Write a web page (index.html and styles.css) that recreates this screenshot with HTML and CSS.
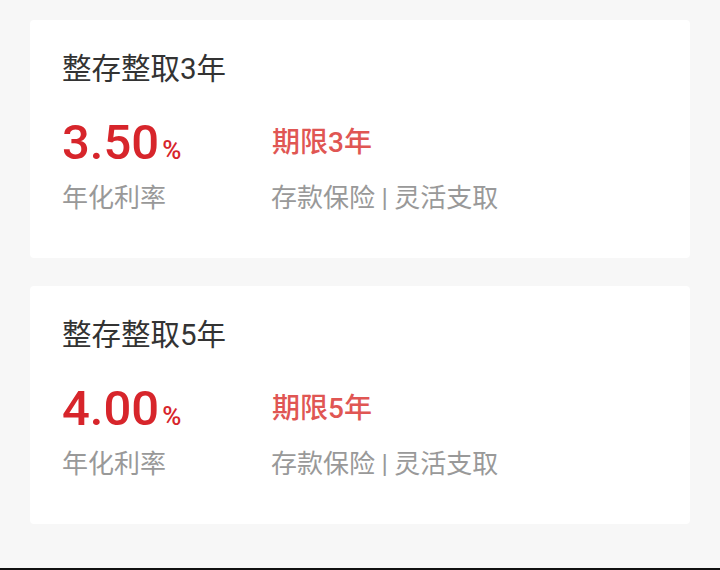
FILE: index.html
```html
<!DOCTYPE html>
<html lang="zh-CN">

<head>
    <meta charset="UTF-8">
    <meta name="viewport" content="width=device-width, initial-scale=1.0">
    <title>整存整取</title>
    <link rel="stylesheet" href="styles.css">
</head>

<body>
    <div id="page">
        <!-- 3 year product -->
        <div class="card">
            <div class="title">整存整取3年</div>
            <div class="stats">
                <div class="col">
                    <div class="rate">3.50<span class="pct">%</span></div>
                    <div class="label">年化利率</div>
                </div>
                <div class="col">
                    <div class="term">期限3年</div>
                    <div class="label">存款保险 | 灵活支取</div>
                </div>
            </div>
        </div>

        <!-- 5 year product -->
        <div class="card">
            <div class="title">整存整取5年</div>
            <div class="stats">
                <div class="col">
                    <div class="rate">4.00<span class="pct">%</span></div>
                    <div class="label">年化利率</div>
                </div>
                <div class="col">
                    <div class="term">期限5年</div>
                    <div class="label">存款保险 | 灵活支取</div>
                </div>
            </div>
        </div>
    </div>
</body>

</html>
```

FILE: styles.css
```css
body {
    background-color: #f7f7f7;
    font-family: Roboto, "Noto Sans CJK SC", sans-serif;
    margin: 0;
    padding: 0;
}

#page {
    min-height: 570px;
    box-sizing: border-box;
    padding: 20px 30px 0;
    border-bottom: 2px solid #111;
    display: flex;
    flex-direction: column;
    gap: 28px;
}

.card {
    background-color: #fff;
    border-radius: 4px;
    height: 238px;
    box-sizing: border-box;
    padding: 29px 32px 0;
}

.title {
    color: #333;
    font-size: 29.5px;
    line-height: 40px;
}

.stats {
    display: grid;
    grid-template-columns: 209px auto;
    margin-top: 26px;
}

.rate {
    color: #d7252b;
    font-size: 49px;
    font-weight: 500;
    line-height: 56px;
    height: 56px;
}

.pct {
    font-size: 26px;
    margin-left: 3px;
}

.term {
    color: #e05653;
    font-size: 28px;
    font-weight: 500;
    line-height: 56px;
    height: 56px;
    padding-left: 1px;
}

.label {
    color: #999;
    font-size: 26px;
    line-height: 36px;
    margin-top: 9px;
}
```
